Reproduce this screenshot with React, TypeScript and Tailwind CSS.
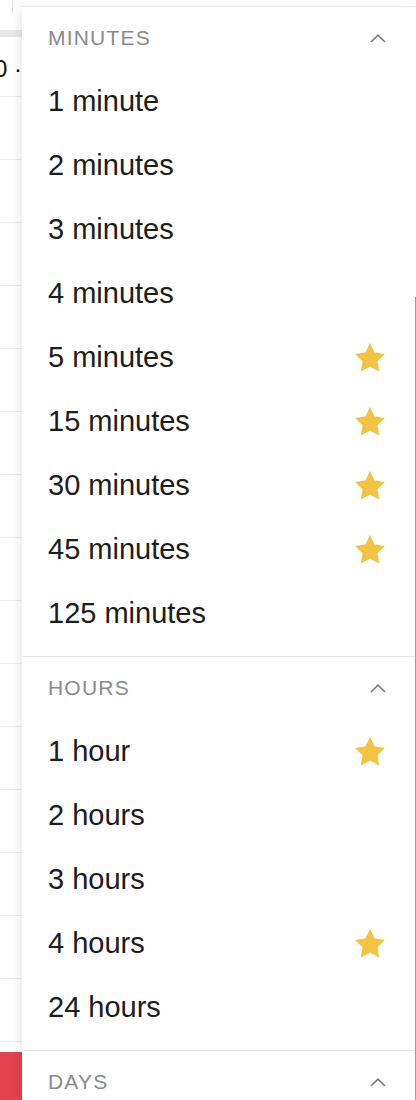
import { Fragment } from 'react'

type Item = { label: string; starred?: boolean }
type Section = { title: string; items: Item[] }

const sections: Section[] = [
  {
    title: 'Minutes',
    items: [
      { label: '1 minute' },
      { label: '2 minutes' },
      { label: '3 minutes' },
      { label: '4 minutes' },
      { label: '5 minutes', starred: true },
      { label: '15 minutes', starred: true },
      { label: '30 minutes', starred: true },
      { label: '45 minutes', starred: true },
      { label: '125 minutes' },
    ],
  },
  {
    title: 'Hours',
    items: [
      { label: '1 hour', starred: true },
      { label: '2 hours' },
      { label: '3 hours' },
      { label: '4 hours', starred: true },
      { label: '24 hours' },
    ],
  },
  {
    title: 'Days',
    items: [{ label: '1 day', starred: true }, { label: '1 week' }],
  },
]

function StarIcon() {
  return (
    <svg width="30" height="29" viewBox="2 2 20 19.3" className="block shrink-0">
      <polygon
        points="12,2 15.09,8.26 22,9.27 17,14.14 18.18,21.02 12,17.77 5.82,21.02 7,14.14 2,9.27 8.91,8.26"
        fill="#f5c344"
      />
    </svg>
  )
}

function ChevronUp() {
  return (
    <svg width="16" height="9" viewBox="0 0 16 9" className="block shrink-0">
      <polyline points="1,8 8,1.2 15,8" fill="none" stroke="#7a7a7a" strokeWidth="1.6" />
    </svg>
  )
}

// page content that sits underneath the dropdown
function Background() {
  const rows = Array.from({ length: 15 })
  return (
    <div className="flex flex-col">
      <div className="h-[13px] w-[13px] border-r border-[#e2e2e2]" />
      <div className="h-[17px]" />
      <div className="h-[7px] bg-[#e7e7e7]" />
      <div className="h-[60px] border-b border-[#ededed] flex items-center">
        <span className="-ml-[6px] mt-[4px] text-[24px] leading-none text-[#111]">0 ·</span>
      </div>
      {rows.map((_, i) => (
        <div key={i} className="h-[63px] border-b border-[#ededed]" />
      ))}
      <div className="h-[10px]" />
      <div className="h-[48px] bg-[#e3434f]" />
    </div>
  )
}

export default function App() {
  return (
    <div
      className="relative w-[416px] h-[1100px] overflow-hidden bg-white"
      style={{ fontFamily: '"Liberation Sans", Arial, sans-serif' }}
    >
      <Background />

      {/* dropdown */}
      <div className="absolute left-[22px] top-[6px] right-0 bottom-0 bg-white border-t border-[#e9e9e9] shadow-[-6px_0_8px_-2px_rgba(0,0,0,0.07)] overflow-hidden">
        {sections.map((section) => (
          <Fragment key={section.title}>
            <div className="pb-[11px] border-b border-[#e7e7e7]">
              <div className="h-[62px] flex items-center justify-between pl-[26px] pr-[30px]">
                <span className="text-[21px] uppercase tracking-[1.2px] text-[#8a8a8a]">
                  {section.title}
                </span>
                <ChevronUp />
              </div>
              {section.items.map((item) => (
                <div
                  key={item.label}
                  className="h-[64px] flex items-center justify-between pl-[26px] pr-[31px]"
                >
                  <span className="text-[29px] mt-[2px] text-[#1c1c1c]">{item.label}</span>
                  {item.starred && <StarIcon />}
                </div>
              ))}
            </div>
          </Fragment>
        ))}
        {/* scrollbar edge */}
        <div className="absolute right-0 top-[290px] bottom-0 w-px bg-[#9a9a9a]" />
      </div>
    </div>
  )
}
